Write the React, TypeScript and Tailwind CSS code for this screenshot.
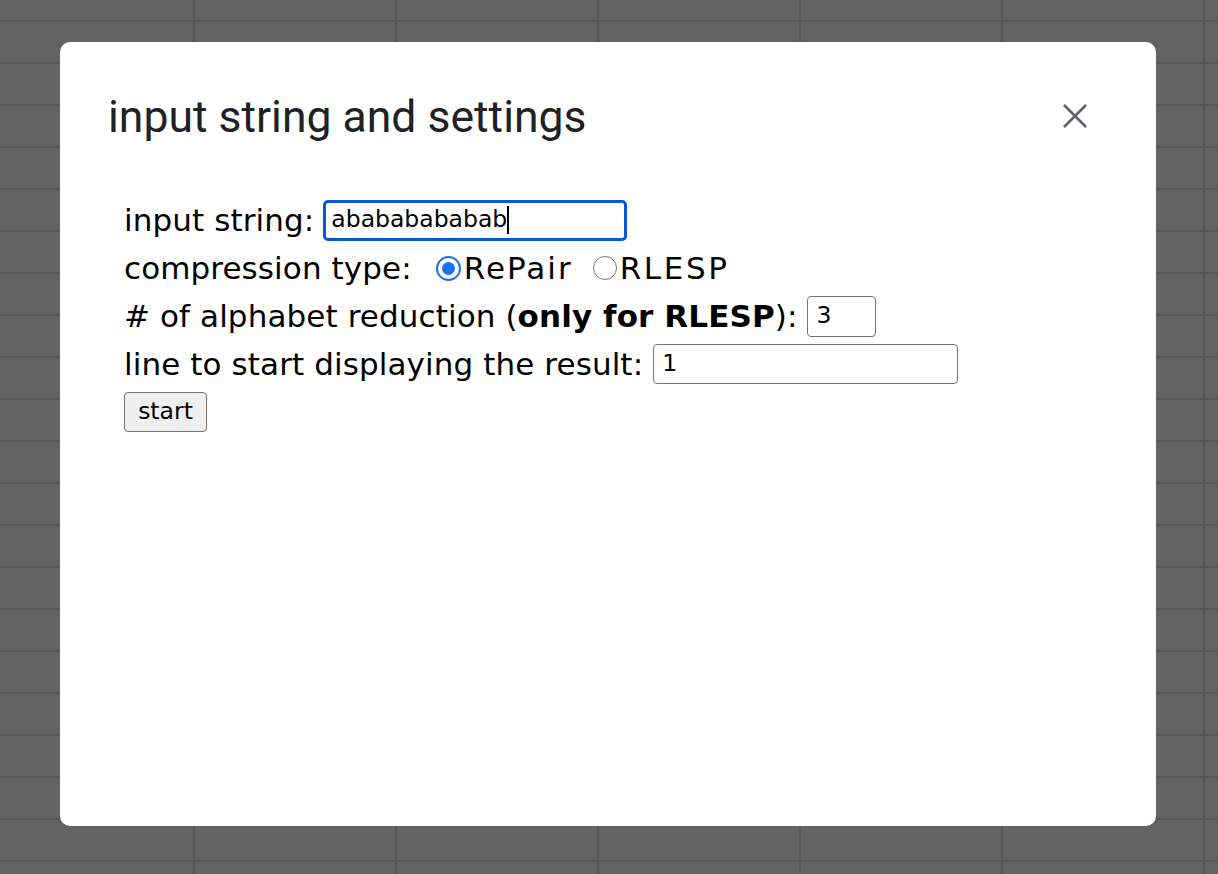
export default function App() {
  return (
    <div className="h-[874px] w-full overflow-hidden bg-[#636363] bg-[linear-gradient(to_right,#575757_2px,transparent_2px),linear-gradient(to_bottom,#575757_2px,transparent_2px)] bg-[size:202px_42px] bg-[position:193px_20px] pt-[42px] pl-[60px]">
      {/* Dialog */}
      <div className="w-[1096px] h-[784px] bg-white rounded-[10px] flex flex-col">
        {/* Header */}
        <div className="flex items-start justify-between pl-12 pr-[61px] pt-[49px]">
          <h1 className="font-['Roboto',sans-serif] text-[44.5px] leading-[52px] text-[#202124]">
            input string and settings
          </h1>
          <button className="w-10 h-10 mt-[5px] flex items-center justify-center text-[#5f6368]">
            <svg width="26" height="26" viewBox="0 0 26 26">
              <path d="M2 2 L24 24 M24 2 L2 24" stroke="currentColor" strokeWidth="2.6" />
            </svg>
          </button>
        </div>

        {/* Form */}
        <div className="pl-16 pt-[53px] font-['DejaVu_Sans',sans-serif] text-[31px] tracking-[0.1px] text-black">
          <div className="h-12 flex items-center">
            <span>input string:</span>
            <div className="ml-[9px] w-[304px] h-[41px] border-[3px] border-[#0b57d0] rounded-[5px] flex items-center px-[5px] text-[23.5px] tracking-normal">
              <span>abababababab</span>
              <span className="w-[2px] h-[28px] bg-black" />
            </div>
          </div>

          <div className="h-12 flex items-center">
            <span>compression type:</span>
            <span className="ml-[24px] w-[25px] h-[25px] rounded-full border-[2px] border-[#1a73e8] flex items-center justify-center">
              <span className="w-[13px] h-[13px] rounded-full bg-[#1a73e8]" />
            </span>
            <span className="ml-[3px] tracking-[2px]">RePair</span>
            <span className="ml-[20px] w-[24px] h-[24px] rounded-full border-[1.5px] border-[#767676]" />
            <span className="ml-[3px] tracking-[2.6px]">RLESP</span>
          </div>

          <div className="h-12 flex items-center">
            <span>
              # of alphabet reduction (<b>only for RLESP</b>):
            </span>
            <div className="ml-[10px] w-[69px] h-[41px] border-[1.5px] border-[#767676] rounded-[4px] flex items-center px-[8px] text-[23.5px] tracking-normal">
              3
            </div>
          </div>

          <div className="h-12 flex items-center">
            <span>line to start displaying the result:</span>
            <div className="ml-[10px] w-[305px] h-10 border-[1.5px] border-[#767676] rounded-[4px] flex items-center px-[8px] text-[23.5px] tracking-normal">
              1
            </div>
          </div>

          <div className="h-12 flex items-center">
            <button className="w-[83px] h-10 bg-[#efefef] border-[1.5px] border-[#767676] rounded-[4px] text-[23.5px] tracking-normal font-['DejaVu_Sans',sans-serif]">
              start
            </button>
          </div>
        </div>
      </div>
    </div>
  )
}
